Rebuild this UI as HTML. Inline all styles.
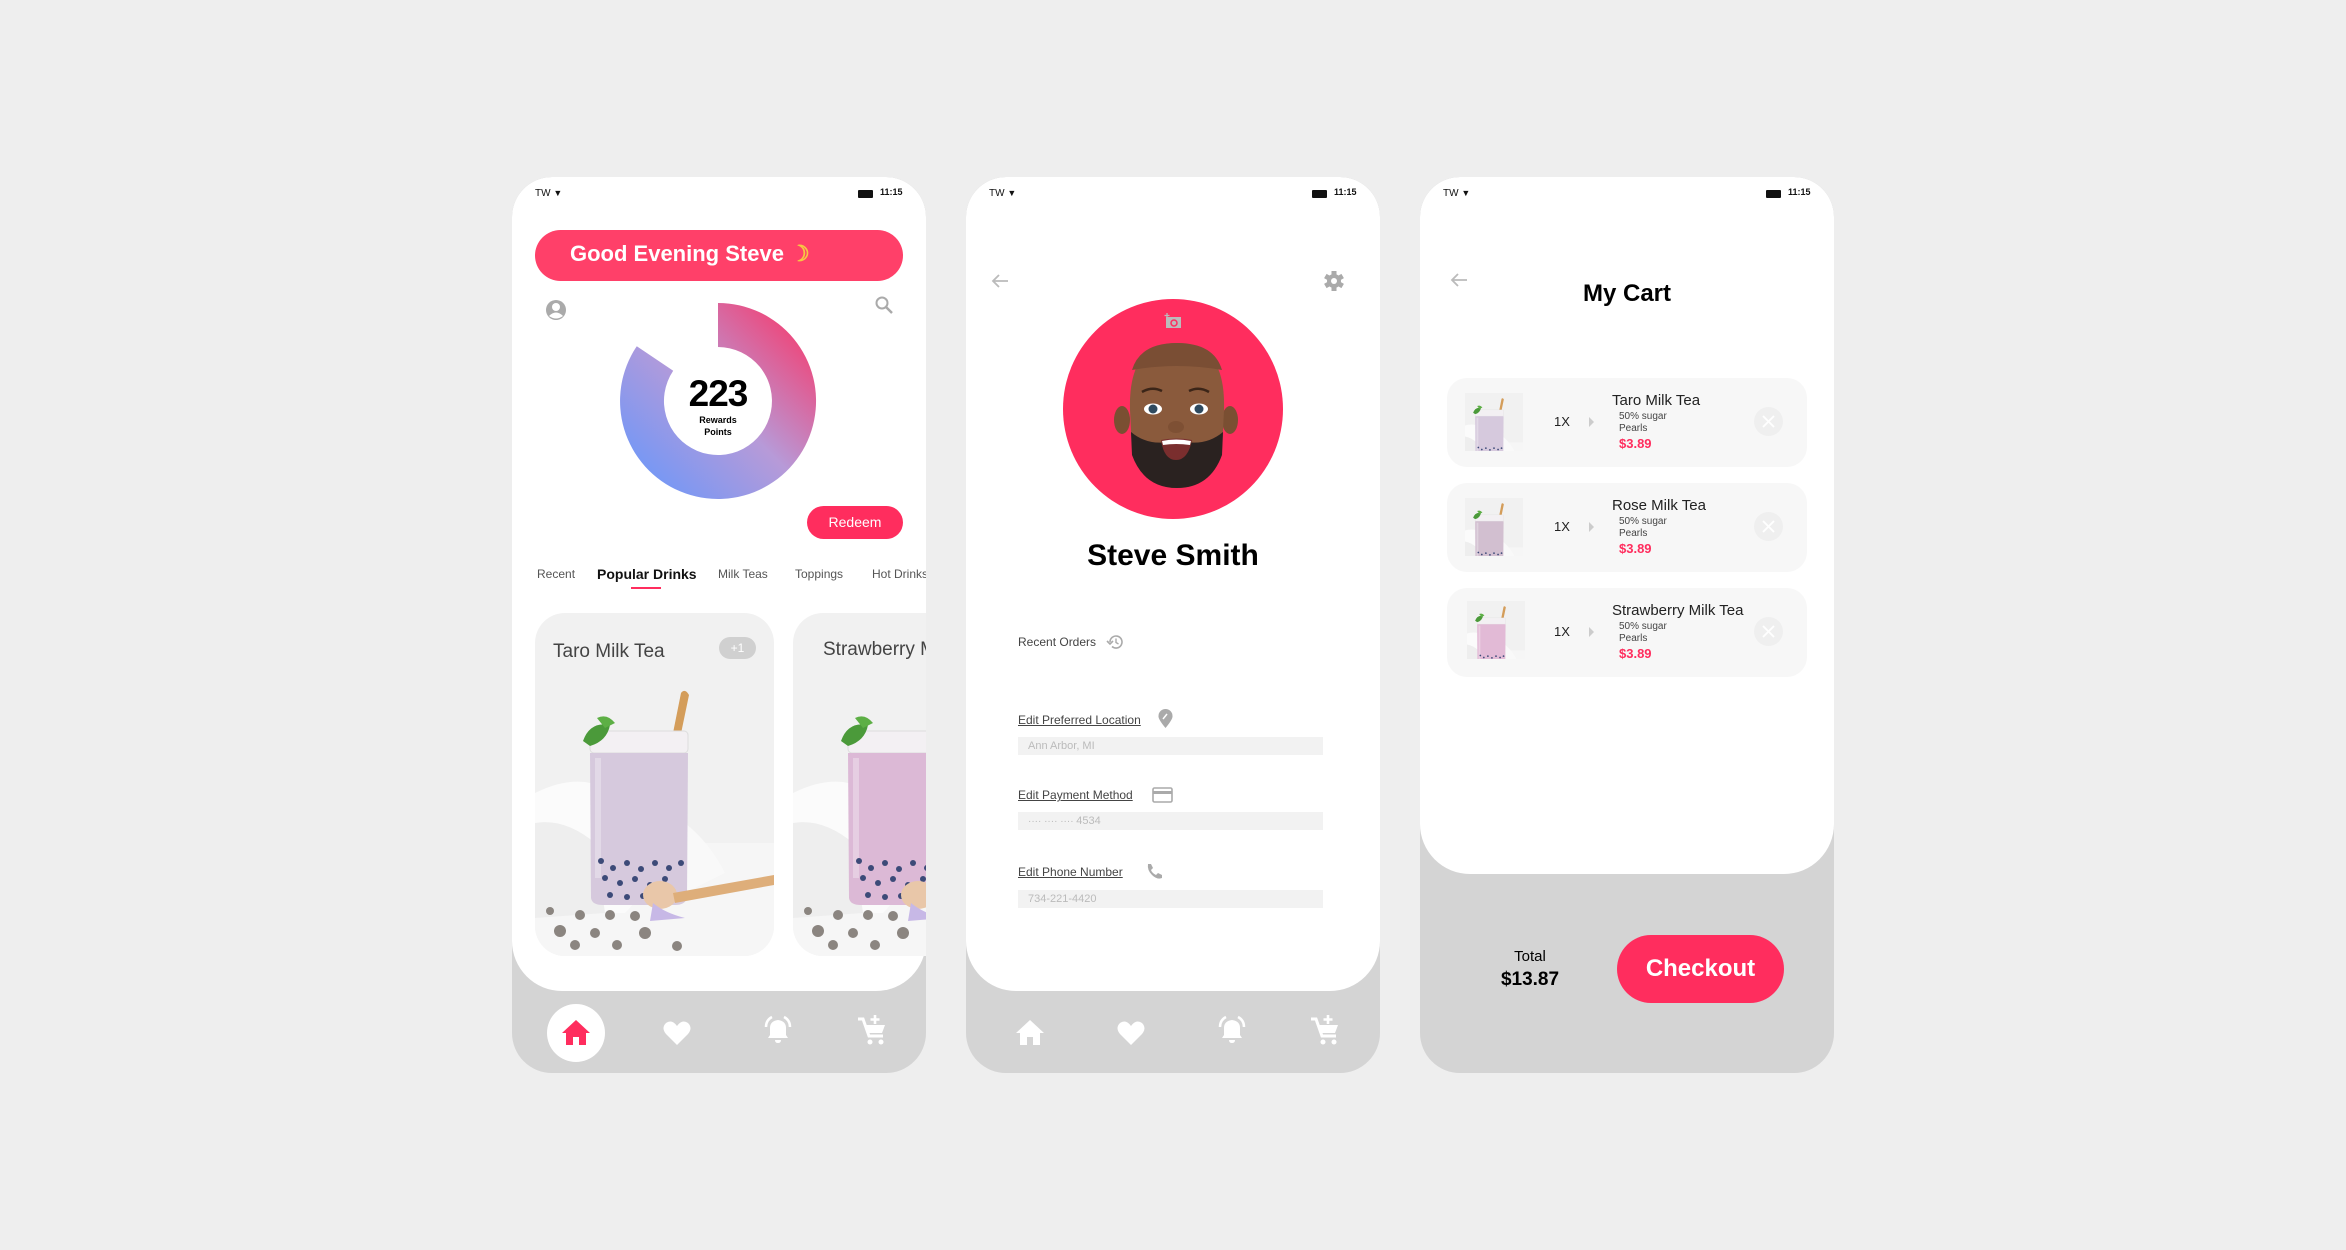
<!DOCTYPE html>
<html><head><meta charset="utf-8">
<style>
*{margin:0;padding:0;box-sizing:border-box}
body{width:2346px;height:1250px;background:#eeeeee;position:relative;overflow:hidden;font-family:"Liberation Sans",sans-serif}
.a{position:absolute}
.phone{position:absolute;top:177px;width:414px;height:896px;background:#d4d4d4;border-radius:40px;overflow:hidden}
.card{position:absolute;left:0;top:0;width:414px;background:#fff;border-radius:40px 40px 50px 50px}
.tw{position:absolute;left:23px;top:11px;font-size:10px;color:#111}
.tm{position:absolute;left:368px;top:10px;font-size:9px;font-weight:bold;color:#111}
.lbl{position:absolute;font-size:12px;color:#444}
.ul{text-decoration:underline}
.fld{position:absolute;left:52px;width:305px;height:18px;background:#f2f2f2;font-size:11px;color:#bbb;padding-left:10px;line-height:18px}
.item{position:absolute;left:27px;width:360px;height:89px;background:#f7f7f7;border-radius:20px}
.item .q{position:absolute;left:107px;top:36px;font-size:13px;color:#222}
.item .tri{position:absolute;left:142px;top:39px;width:0;height:0;border-left:5px solid #ccc;border-top:5px solid transparent;border-bottom:5px solid transparent}
.item .n{position:absolute;left:165px;top:14px;font-size:15px;color:#222}
.item .s{position:absolute;left:172px;top:33px;font-size:10px;color:#444;line-height:12px}
.item .p{position:absolute;left:172px;top:58px;font-size:13px;color:#ff2d5e;font-weight:bold}
.item .x{position:absolute;left:307px;top:29px;width:29px;height:29px;border-radius:50%;background:#efefef}
</style></head><body>
<svg width="0" height="0" style="position:absolute">
<defs>
<linearGradient id="dg" x1="1" y1="0" x2="0" y2="1">
<stop offset="0" stop-color="#ff2d5e"/><stop offset="0.5" stop-color="#b79ad8"/><stop offset="1" stop-color="#5f97ff"/>
</linearGradient>
<g id="drink">
<rect width="239" height="343" fill="#f1f1f1"/>
<rect y="230" width="239" height="113" fill="#f6f6f6"/>
<path d="M0 180 Q40 160 70 175 L110 230 Q120 270 90 300 L0 300Z" fill="#fbfbfb"/>
<path d="M0 210 Q30 205 60 230 L70 300 L0 305Z" fill="#eeeeee"/>
<path d="M150 210 Q175 230 190 260 L150 280Z" fill="#f9f9f9"/>
<path d="M135 135 L146 80 Q150 75 154 82 L143 135Z" fill="#d49d5a"/>
<rect x="55" y="118" width="98" height="22" rx="4" fill="#f3f0f3" stroke="#ddd"/>
<path d="M55 140 L153 140 L152 285 Q150 292 140 292 L68 292 Q57 292 56 285Z" fill="currentColor"/>
<rect x="60" y="145" width="6" height="120" fill="#fff" opacity="0.3"/>
<g fill="#3c4a78">
<circle cx="66" cy="248" r="3"/><circle cx="78" cy="255" r="3"/><circle cx="92" cy="250" r="3"/><circle cx="106" cy="256" r="3"/><circle cx="120" cy="250" r="3"/><circle cx="134" cy="255" r="3"/><circle cx="146" cy="250" r="3"/>
<circle cx="70" cy="265" r="3"/><circle cx="85" cy="270" r="3"/><circle cx="100" cy="266" r="3"/><circle cx="115" cy="272" r="3"/><circle cx="130" cy="266" r="3"/>
<circle cx="75" cy="282" r="3"/><circle cx="92" cy="284" r="3"/><circle cx="108" cy="283" r="3"/><circle cx="124" cy="284" r="3"/>
</g>
<path d="M48 128 Q55 108 75 112 Q72 128 55 133Z" fill="#4b9a3a"/>
<path d="M62 105 Q72 100 80 110 L70 115Z" fill="#5daf45"/>
<ellipse cx="125" cy="282" rx="17" ry="14" fill="#e9c7a9"/>
<path d="M138 280 L239 262 L239 272 L140 290Z" fill="#deae7a"/>
<path d="M118 290 Q130 300 150 305 L115 308Z" fill="#c7b8e6"/>
<g fill="#8b8580">
<circle cx="25" cy="318" r="6"/><circle cx="45" cy="302" r="5"/><circle cx="40" cy="332" r="5"/><circle cx="60" cy="320" r="5"/><circle cx="75" cy="302" r="5"/><circle cx="100" cy="303" r="5"/><circle cx="110" cy="320" r="6"/><circle cx="82" cy="332" r="5"/><circle cx="15" cy="298" r="4"/><circle cx="142" cy="333" r="5"/>
</g>
</g>
<g id="home"><path d="M-14 0 L0 -13 L14 0 L10 0 L10 12 L3 12 L3 4 L-3 4 L-3 12 L-10 12 L-10 0Z"/></g>
<g id="heart"><path d="M0 12 L-11 1 Q-16 -5 -11 -10 Q-5 -14 0 -7 Q5 -14 11 -10 Q16 -5 11 1Z"/></g>
<g id="bell"><path d="M-10 7 L-8 4 L-8 -3 Q-8 -10 0 -11 Q8 -10 8 -3 L8 4 L10 7Z M-3 9 L3 9 Q3 12 0 12 Q-3 12 -3 9Z"/><path d="M-12 -4 Q-12 -11 -6 -14 M12 -4 Q12 -11 6 -14" fill="none" stroke="#fff" stroke-width="2.5"/></g>
<g id="cart"><path d="M-14 -12 L-9 -12 L-3 5 L11 5" fill="none" stroke="#fff" stroke-width="3"/><path d="M-7 -6 L13 -6 L10 2 L-4 2Z"/><circle cx="-2" cy="11" r="2.5"/><circle cx="9" cy="11" r="2.5"/><path d="M3 -16 L3 -7 M-1.5 -11.5 L7.5 -11.5" stroke="#fff" stroke-width="2.6"/></g>
</defs>
</svg>

<!-- PHONE 1 -->
<div class="phone" style="left:512px">
<div class="card" style="height:814px">
<div class="tw">TW <span style="font-size:9px">&#9660;</span></div>
<div class="a" style="left:346px;top:13px;width:15px;height:8px;background:#111;border-radius:1px"></div>
<div class="tm" style="left:368px">11:15</div>
<div class="a" style="left:23px;top:53px;width:368px;height:51px;border-radius:26px;background:#ff4069"></div>
<div class="a" style="left:58px;top:64px;font-size:22px;font-weight:bold;color:#fff">Good Evening Steve <span style="color:#f6c942">&#9789;</span></div>
<svg class="a" style="left:33px;top:122px" width="22" height="22" viewBox="0 0 22 22"><circle cx="11" cy="11" r="10" fill="#aaa"/><circle cx="11" cy="8" r="4" fill="#fff"/><path d="M4 17 Q11 10 18 17 Q11 22 4 17Z" fill="#fff"/></svg>
<svg class="a" style="left:362px;top:118px" width="20" height="20" viewBox="0 0 20 20"><circle cx="8" cy="8" r="5.5" fill="none" stroke="#aaa" stroke-width="2"/><path d="M12 12 L18 18" stroke="#aaa" stroke-width="2.5"/></svg>
<svg class="a" style="left:0;top:0" width="414" height="400" viewBox="512 177 414 400">
<path d="M718,303 A98,98 0 1 1 636.8,346.2 L673.2,370.8 A54,54 0 1 0 718,347 Z" fill="url(#dg)"/>
</svg>
<div class="a" style="left:156px;top:196px;width:100px;text-align:center;font-size:37px;font-weight:bold;color:#000;letter-spacing:-1px">223</div>
<div class="a" style="left:156px;top:237px;width:100px;text-align:center;font-size:9px;font-weight:bold;color:#000;line-height:12px">Rewards<br>Points</div>
<div class="a" style="left:295px;top:329px;width:96px;height:33px;border-radius:17px;background:#ff2d5e;color:#fff;font-size:14px;text-align:center;line-height:33px">Redeem</div>
<div class="a" style="left:25px;top:390px;font-size:12px;color:#555">Recent</div>
<div class="a" style="left:85px;top:389px;font-size:14px;font-weight:bold;color:#111">Popular Drinks</div>
<div class="a" style="left:119px;top:410px;width:30px;height:2px;background:#ff2d5e"></div>
<div class="a" style="left:206px;top:390px;font-size:12px;color:#555">Milk Teas</div>
<div class="a" style="left:283px;top:390px;font-size:12px;color:#555">Toppings</div>
<div class="a" style="left:360px;top:390px;font-size:12px;color:#555;white-space:nowrap">Hot Drinks</div>
<div class="a" style="left:23px;top:436px;width:239px;height:343px;border-radius:30px;overflow:hidden">
<svg width="239" height="343" viewBox="0 0 239 343" style="color:#d6c9dd"><use href="#drink"/></svg>
<div class="a" style="left:18px;top:28px;font-size:19px;color:#444">Taro Milk Tea</div>
<div class="a" style="left:184px;top:24px;width:37px;height:22px;border-radius:11px;background:#d0d0d0;color:#fff;font-size:12px;text-align:center;line-height:22px">+1</div>
</div>
<div class="a" style="left:281px;top:436px;width:239px;height:343px;border-radius:30px;overflow:hidden">
<svg width="239" height="343" viewBox="0 0 239 343" style="color:#dcb9d6"><use href="#drink"/></svg>
<div class="a" style="left:30px;top:26px;font-size:19px;color:#444;white-space:nowrap">Strawberry Milk Tea</div>
</div>
</div>
<div class="a" style="left:35px;top:827px;width:58px;height:58px;border-radius:50%;background:#fff"></div>
<svg class="a" style="left:0;top:826px" width="414" height="60" viewBox="512 1003 414 60" fill="#fff">
<use href="#home" x="576" y="1033" fill="#ff2d5e"/>
<use href="#heart" x="677" y="1033"/><use href="#bell" x="778" y="1031"/><use href="#cart" x="872" y="1031"/>
</svg>
</div>

<!-- PHONE 2 -->
<div class="phone" style="left:966px">
<div class="card" style="height:814px">
<div class="tw">TW <span style="font-size:9px">&#9660;</span></div>
<div class="a" style="left:346px;top:13px;width:15px;height:8px;background:#111;border-radius:1px"></div>
<div class="tm">11:15</div>
<svg class="a" style="left:24px;top:94px" width="20" height="20" viewBox="0 0 20 20"><path d="M18 10 L3 10 M9 4 L3 10 L9 16" fill="none" stroke="#bbb" stroke-width="1.8"/></svg>
<svg class="a" style="left:357px;top:93px" width="22" height="22" viewBox="-11 -11 22 22"><g fill="#aaa"><circle r="7"/><rect x="-2.5" y="-10" width="5" height="20"/><rect x="-2.5" y="-10" width="5" height="20" transform="rotate(60)"/><rect x="-2.5" y="-10" width="5" height="20" transform="rotate(120)"/></g><circle r="3" fill="#fff"/></svg>
<div class="a" style="left:97px;top:122px;width:220px;height:220px;border-radius:50%;background:#ff2d5e"></div>
<svg class="a" style="left:198px;top:136px" width="18" height="16" viewBox="0 0 18 16"><rect x="2" y="4" width="15" height="11" fill="#bbb"/><circle cx="10" cy="10" r="3" fill="none" stroke="#ff2d5e" stroke-width="1.5"/><path d="M3 0 L3 5 M0.5 2.5 L5.5 2.5" stroke="#bbb" stroke-width="1.3"/></svg>
<svg class="a" style="left:0;top:0" width="414" height="400" viewBox="966 177 414 400">
<ellipse cx="1122" cy="420" rx="8" ry="14" fill="#7a4f32"/><ellipse cx="1230" cy="420" rx="8" ry="14" fill="#7a4f32"/>
<path d="M1130 410 Q1128 343 1177 343 Q1226 343 1224 410 L1222 450 Q1210 488 1177 488 Q1144 488 1132 450Z" fill="#8a5a3c"/>
<path d="M1132 370 Q1140 343 1177 343 Q1214 343 1222 370 Q1177 362 1132 370Z" fill="#7a4e34"/>
<path d="M1131 432 Q1150 448 1177 440 Q1204 448 1223 432 L1222 455 Q1210 488 1177 488 Q1144 488 1132 455Z" fill="#2a2220"/>
<path d="M1142 392 Q1152 386 1162 391 M1189 391 Q1199 386 1209 392" stroke="#3b2518" stroke-width="2.5" fill="none"/>
<ellipse cx="1153" cy="409" rx="9" ry="5.5" fill="#fff"/><ellipse cx="1199" cy="409" rx="9" ry="5.5" fill="#fff"/>
<circle cx="1153" cy="409" r="4.5" fill="#2f4a5f"/><circle cx="1199" cy="409" r="4.5" fill="#2f4a5f"/>
<ellipse cx="1176" cy="427" rx="8" ry="6" fill="#7e5034"/>
<path d="M1161 440 Q1176 437 1192 440 Q1188 460 1176 460 Q1164 460 1161 440Z" fill="#7a2e2e"/>
<path d="M1162 441 Q1176 438 1191 441 L1190 445 Q1176 443 1163 445Z" fill="#fff"/>
</svg>
<div class="a" style="left:0;top:362px;width:414px;text-align:center;font-size:30px;font-weight:bold;color:#000">Steve Smith</div>
<div class="lbl" style="left:52px;top:458px">Recent Orders</div>
<svg class="a" style="left:140px;top:456px" width="18" height="18" viewBox="0 0 18 18"><path d="M4 9 A6 6 0 1 1 6 13.5" fill="none" stroke="#aaa" stroke-width="1.6"/><path d="M1 8 L4 11 L7 8" fill="none" stroke="#aaa" stroke-width="1.6"/><path d="M10 5.5 L10 9.5 L12.5 11" fill="none" stroke="#aaa" stroke-width="1.4"/></svg>
<div class="lbl ul" style="left:52px;top:536px">Edit Preferred Location</div>
<svg class="a" style="left:192px;top:532px" width="15" height="20" viewBox="0 0 15 20"><path d="M7.5 19 Q0 10 0.5 7 A7 7 0 0 1 14.5 7 Q15 10 7.5 19Z" fill="#aaa"/><path d="M5 10 L9 5" stroke="#fff" stroke-width="1.5"/></svg>
<div class="fld" style="top:560px">Ann Arbor, MI</div>
<div class="lbl ul" style="left:52px;top:611px">Edit Payment Method</div>
<svg class="a" style="left:186px;top:610px" width="21" height="16" viewBox="0 0 21 16"><rect x="1" y="1" width="19" height="14" rx="1.5" fill="none" stroke="#aaa" stroke-width="1.6"/><rect x="1" y="4" width="19" height="3" fill="#aaa"/></svg>
<div class="fld" style="top:635px;font-size:10px">&middot;&middot;&middot;&middot; &middot;&middot;&middot;&middot; &middot;&middot;&middot;&middot; <span style="font-size:11px">4534</span></div>
<div class="lbl ul" style="left:52px;top:688px">Edit Phone Number</div>
<svg class="a" style="left:180px;top:685px" width="18" height="18" viewBox="0 0 18 18"><path d="M2 2 Q1 8 6 13 Q11 18 16 16 L16 13 L12 11 L10 13 Q6 11 5 8 L7 6 L5 2Z" fill="#aaa"/></svg>
<div class="fld" style="top:713px;font-size:11px">734-221-4420</div>
</div>
<svg class="a" style="left:0;top:826px" width="414" height="60" viewBox="966 1003 414 60" fill="#fff">
<use href="#home" x="1030" y="1033"/>
<use href="#heart" x="1131" y="1033"/><use href="#bell" x="1232" y="1031"/><use href="#cart" x="1325" y="1031"/>
</svg>
</div>

<!-- PHONE 3 -->
<div class="phone" style="left:1420px">
<div class="card" style="height:697px">
<div class="tw">TW <span style="font-size:9px">&#9660;</span></div>
<div class="a" style="left:346px;top:13px;width:15px;height:8px;background:#111;border-radius:1px"></div>
<div class="tm">11:15</div>
<svg class="a" style="left:29px;top:93px" width="20" height="20" viewBox="0 0 20 20"><path d="M18 10 L3 10 M9 4 L3 10 L9 16" fill="none" stroke="#bbb" stroke-width="1.8"/></svg>
<div class="a" style="left:0;top:103px;width:414px;text-align:center;font-size:24px;font-weight:bold;color:#000">My Cart</div>

<div class="item" style="top:201px">
<svg class="a" style="left:18px;top:15px;color:#d6c9dd" width="58" height="58" viewBox="20 60 200 200" preserveAspectRatio="xMidYMid slice"><use href="#drink"/></svg>
<div class="q">1X</div><div class="tri"></div>
<div class="n">Taro Milk Tea</div><div class="s">50% sugar<br>Pearls</div><div class="p">$3.89</div>
<div class="x"><svg width="29" height="29" viewBox="0 0 29 29"><path d="M9 9 L20 20 M20 9 L9 20" stroke="#fff" stroke-width="1.8"/></svg></div>
</div>
<div class="item" style="top:306px">
<svg class="a" style="left:18px;top:15px;color:#d2bfd0" width="58" height="58" viewBox="20 60 200 200" preserveAspectRatio="xMidYMid slice"><use href="#drink"/></svg>
<div class="q">1X</div><div class="tri"></div>
<div class="n">Rose Milk Tea</div><div class="s">50% sugar<br>Pearls</div><div class="p">$3.89</div>
<div class="x"><svg width="29" height="29" viewBox="0 0 29 29"><path d="M9 9 L20 20 M20 9 L9 20" stroke="#fff" stroke-width="1.8"/></svg></div>
</div>
<div class="item" style="top:411px">
<svg class="a" style="left:20px;top:13px;color:#e2bad6" width="58" height="58" viewBox="20 60 200 200" preserveAspectRatio="xMidYMid slice"><use href="#drink"/></svg>
<div class="q">1X</div><div class="tri"></div>
<div class="n">Strawberry Milk Tea</div><div class="s">50% sugar<br>Pearls</div><div class="p">$3.89</div>
<div class="x"><svg width="29" height="29" viewBox="0 0 29 29"><path d="M9 9 L20 20 M20 9 L9 20" stroke="#fff" stroke-width="1.8"/></svg></div>
</div>
</div>
<div class="a" style="left:60px;top:771px;width:100px;text-align:center;font-size:15px;color:#000">Total</div>
<div class="a" style="left:60px;top:792px;width:100px;text-align:center;font-size:19px;font-weight:bold;color:#000">$13.87</div>
<div class="a" style="left:197px;top:758px;width:167px;height:68px;border-radius:34px;background:#ff2d5e;color:#fff;font-size:24px;font-weight:bold;text-align:center;line-height:68px">Checkout</div>
</div>
</body></html>
